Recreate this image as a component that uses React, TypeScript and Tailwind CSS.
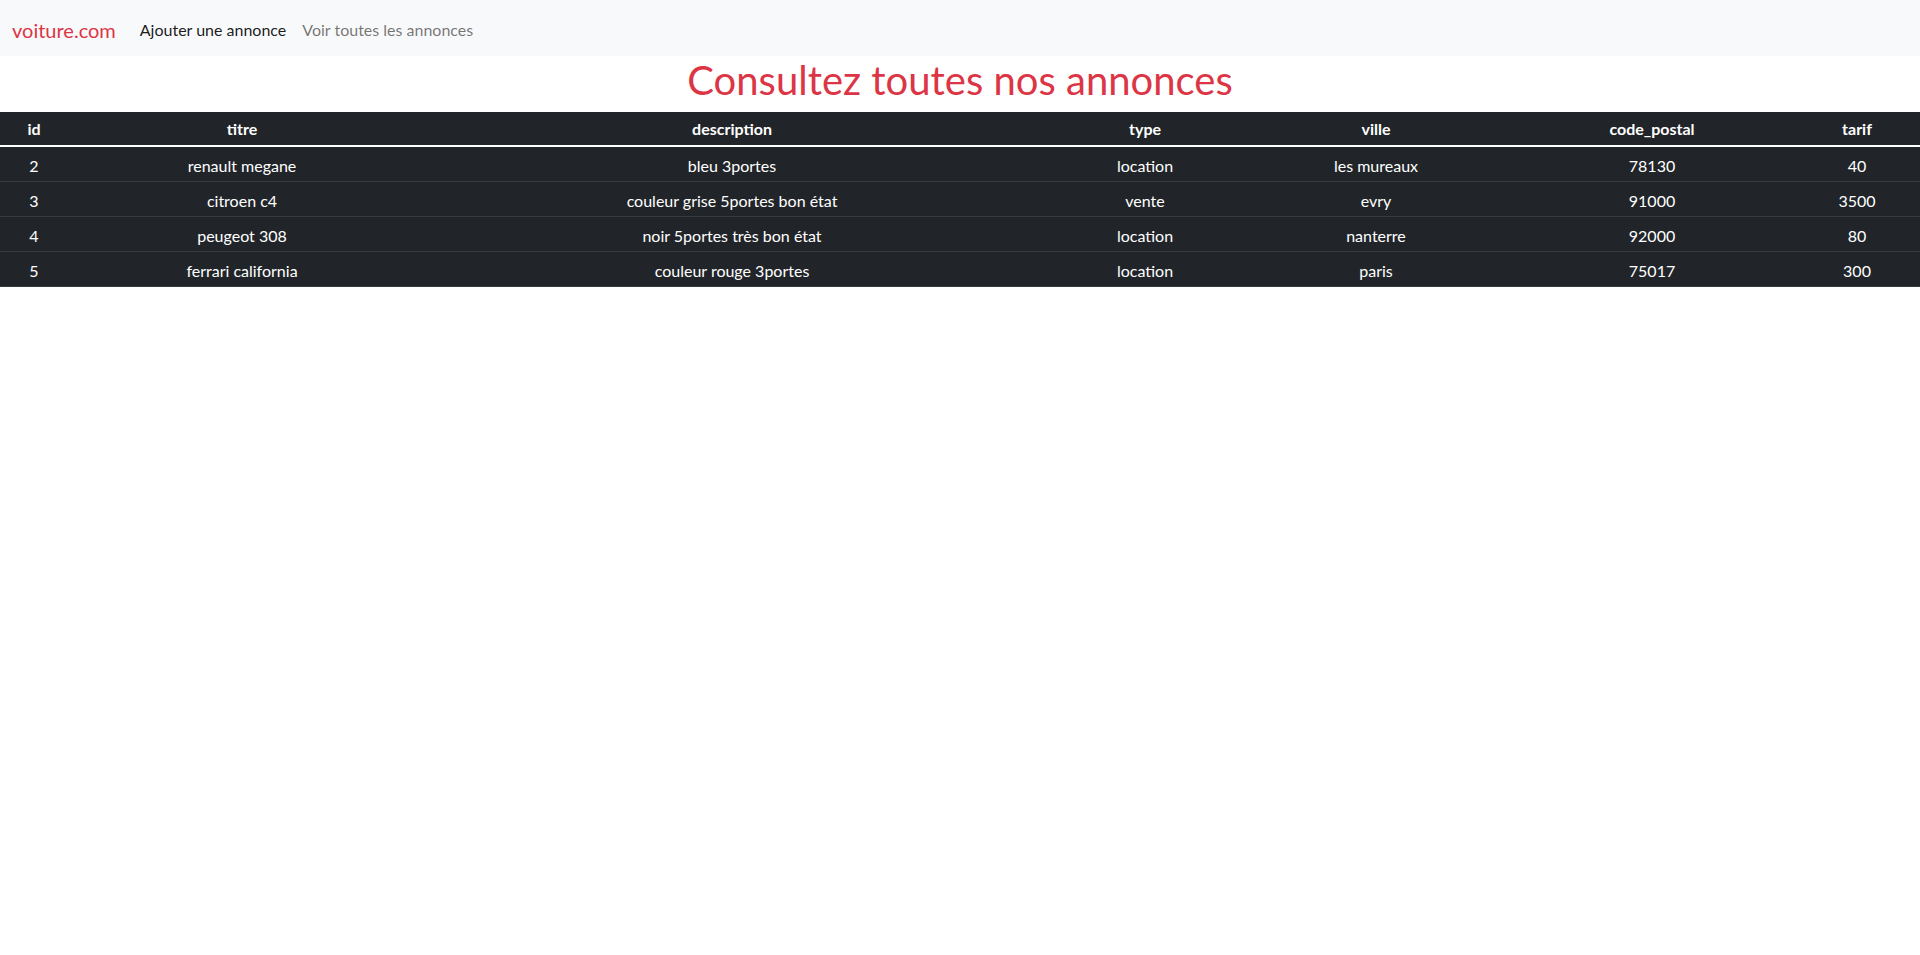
const annonces = [
  { id: 2, titre: "renault megane", description: "bleu 3portes", type: "location", ville: "les mureaux", code_postal: "78130", tarif: "40" },
  { id: 3, titre: "citroen c4", description: "couleur grise 5portes bon état", type: "vente", ville: "evry", code_postal: "91000", tarif: "3500" },
  { id: 4, titre: "peugeot 308", description: "noir 5portes très bon état", type: "location", ville: "nanterre", code_postal: "92000", tarif: "80" },
  { id: 5, titre: "ferrari california", description: "couleur rouge 3portes", type: "location", ville: "paris", code_postal: "75017", tarif: "300" },
];

const colonnes = [
  { key: "id", w: "w-[68px]" },
  { key: "titre", w: "w-[348px]" },
  { key: "description", w: "w-[632px]" },
  { key: "type", w: "w-[194px]" },
  { key: "ville", w: "w-[268px]" },
  { key: "code_postal", w: "w-[284px]" },
  { key: "tarif", w: "w-[126px]" },
] as const;

export default function App() {
  return (
    <div className="min-h-screen bg-white font-['Lato',sans-serif] text-[#212529]">
      <nav className="h-[56px] bg-[#f8f9fa] flex items-center px-3 pt-1">
        <a href="#" className="text-[20px] text-[#dc3545] mr-4">
          voiture.com
        </a>
        <a href="#" className="px-2 text-[16px] text-black/90">
          Ajouter une annonce
        </a>
        <a href="#" className="px-2 text-[16px] text-black/55">
          Voir toutes les annonces
        </a>
      </nav>

      <h1 className="text-[40px] leading-[48px] text-center text-[#dc3545] mb-2">
        Consultez toutes nos annonces
      </h1>

      <table className="w-full table-fixed bg-[#212529] text-white text-[16px]">
        <thead>
          <tr className="border-b-2 border-white">
            {colonnes.map((c) => (
              <th key={c.key} className={`${c.w} h-[34px] font-bold text-center`}>
                {c.key}
              </th>
            ))}
          </tr>
        </thead>
        <tbody>
          {annonces.map((a) => (
            <tr key={a.id} className="border-b border-[#373b3e]">
              {colonnes.map((c) => (
                <td key={c.key} className="h-[35px] pt-1 text-center">
                  {a[c.key]}
                </td>
              ))}
            </tr>
          ))}
        </tbody>
      </table>
    </div>
  );
}
